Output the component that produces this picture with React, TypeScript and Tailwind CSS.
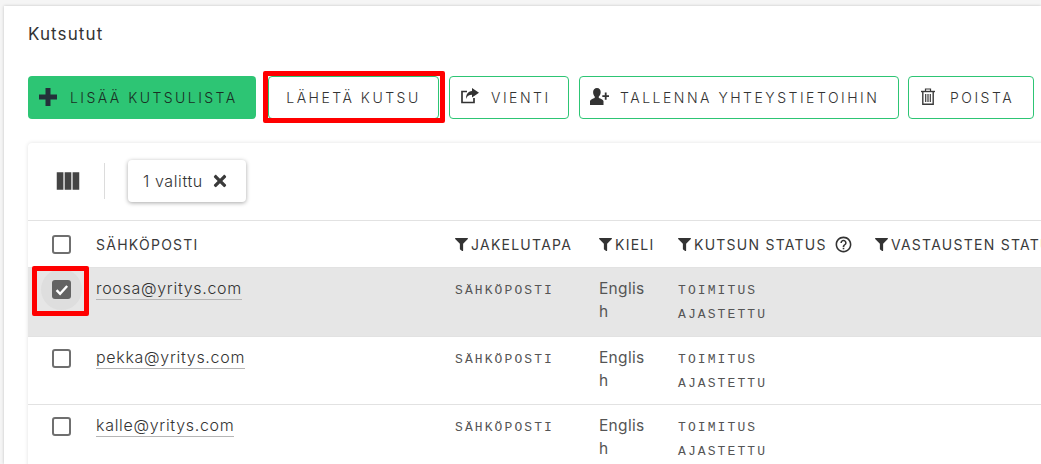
import { FaFilter, FaTimes } from "react-icons/fa";
import { MdViewColumn, MdHelpOutline } from "react-icons/md";

const sans = "font-['Inter','Noto_Sans',sans-serif]";
const rows = ["roosa@yritys.com", "pekka@yritys.com", "kalle@yritys.com"];

function Box() {
  return <span className="block w-[19px] h-[19px] rounded-[3px] border-2 border-[#6f6f6f] bg-white" />;
}

function Head({ label, cls }: { label: string; cls: string }) {
  return (
    <div className={`flex items-center shrink-0 ${cls}`}>
      <FaFilter className="w-[13px] h-[13px] text-[#333] shrink-0 mr-[3px]" />
      <span className="whitespace-nowrap">{label}</span>
    </div>
  );
}

function Outline({ icon, label, cls }: { icon?: React.ReactNode; label: string; cls: string }) {
  return (
    <button className={`flex items-center h-[43px] rounded-[4px] border border-[#2dc574] bg-white text-[14px] font-light tracking-[2.5px] text-[#333] whitespace-nowrap shrink-0 ${cls}`}>
      {icon}
      <span>{label}</span>
    </button>
  );
}

function PlusIcon() {
  return (
    <svg viewBox="0 0 18 18" className="w-[18px] h-[18px] mr-[13px] mb-[2px]" fill="#24303a">
      <path d="M6.5 0h5v6.5H18v5h-6.5V18h-5v-6.5H0v-5h6.5z" />
    </svg>
  );
}

function ShareIcon() {
  return (
    <svg viewBox="0 0 18 16" className="w-[18px] h-[16px] mr-[12px] mb-[3px]">
      <path d="M6 3.5H1v11h12V10" fill="none" stroke="#333" strokeWidth="1.7" />
      <path d="M11 0l7 4.8-7 4.8V6.8C8 6.8 6 8 5 11 4.8 6.5 7 3.3 11 3z" fill="#333" />
    </svg>
  );
}

function UserAddIcon() {
  return (
    <svg viewBox="0 0 19 17" className="w-[19px] h-[17px] mr-[11px] mb-[3px]" fill="#333">
      <path d="M7 0c2.4 0 3.7 1.7 3.7 4 0 2-.8 3.6-1.9 4.5v1.6c2 .8 4.2 1.6 4.7 3V17H0v-3.9c.5-1.4 2.7-2.2 4.7-3V8.500C3.900 7.600 3.100 6 3.100 4 3.100 1.700 4.600 0 7 0z" />
      <path d="M14.800 4.500h1.800v2.700h2.400v1.800h-2.400v2.700h-1.800V9h-2.500V7.200h2.500z" />
    </svg>
  );
}

function TrashIcon() {
  return (
    <svg viewBox="0 0 14 17" className="w-[14px] h-[17px] mr-[15px] mb-[3px]" fill="none" stroke="#3a3a3a">
      <path d="M0 3.500h14" strokeWidth="1.400" />
      <path d="M4.500 3V1h5v2" strokeWidth="1.200" />
      <path d="M1.800 3.500v12.700h10.400V3.500" strokeWidth="1.400" />
      <path d="M4.700 6v8M7 6v8M9.300 6v8" strokeWidth="1.200" />
    </svg>
  );
}

export default function App() {
  return (
    <div className={`w-[1041px] h-[464px] overflow-hidden bg-[#f5f5f5] pl-[4px] pt-[6px] ${sans}`}>
      <div className="w-[1037px] h-[458px] overflow-hidden bg-white pl-[24px] shadow-[0_0_3px_rgba(0,0,0,0.2)]">
        <h2 className="pt-[17px] h-[70px] text-[17px] leading-[22px] text-[#333] font-normal tracking-[1.1px]">Kutsutut</h2>
        <div className="relative flex gap-[10px] h-[43px] w-[1100px]">
          <button className="flex items-center w-[228px] h-[43px] rounded-[4px] bg-[#2dc574] pl-[11px] text-[14px] font-light tracking-[2.45px] text-[#1a2e24] shrink-0 whitespace-nowrap">
            <PlusIcon />
            LISÄÄ KUTSULISTA
          </button>
          <div className="relative shrink-0 ml-[2px]">
            <Outline label="LÄHETÄ KUTSU" cls="w-[171px] justify-center" />
            <div className="absolute left-[-5px] top-[-5px] w-[182px] h-[52px] border-[5px] border-[#ff0000] rounded-[2px] pointer-events-none" />
          </div>
          <Outline label="VIENTI" cls="w-[120px] pl-[11px]" icon={<ShareIcon />} />
          <Outline label="TALLENNA YHTEYSTIETOIHIN" cls="w-[320px] pl-[10px]" icon={<UserAddIcon />} />
          <Outline label="POISTA" cls="w-[126px] pl-[12px] ml-[-1px]" icon={<TrashIcon />} />
        </div>

        <div className="mt-[24px] w-[1100px] bg-white rounded-[4px] shadow-[0_0_4px_rgba(0,0,0,0.12)]">
          <div className="flex items-center h-[77px] pb-[1px]">
            <MdViewColumn className="w-[30px] h-[30px] text-[#444] ml-[25px]" />
            <span className="w-px h-[36px] bg-[#dcdcdc] ml-[21px]" />
            <div className="flex items-center h-[42px] w-[118px] ml-[23px] rounded-[4px] bg-white shadow-[0_1px_4px_rgba(0,0,0,0.35)] pl-[15px] text-[16px] font-light tracking-[0.6px] text-[#333]">
              1 valittu
              <FaTimes className="w-[18px] h-[18px] ml-[8px] text-[#3a3a3a]" />
            </div>
          </div>

          <div className="flex items-center h-[48px] pt-[1px] border-t border-b border-[#e2e2e2] text-[14px] tracking-[1.25px] text-[#3a3a3a]">
            <div className="w-[68px] pl-[24px] shrink-0"><Box /></div>
            <div className="w-[359px] shrink-0">SÄHKÖPOSTI</div>
            <Head label="JAKELUTAPA" cls="w-[144px]" />
            <Head label="KIELI" cls="w-[79px]" />
            <div className="w-[197px] shrink-0 flex items-center">
              <Head label="KUTSUN STATUS" cls="" />
              <MdHelpOutline className="w-[19px] h-[19px] ml-[7px] text-[#333]" />
            </div>
            <Head label="VASTAUSTEN STATUS" cls="w-[200px]" />
          </div>

          {rows.map((email, i) => (
            <div
              key={email}
              className={`flex items-start border-b border-[#e2e2e2] ${i === 0 ? "h-[69px] bg-[#e6e6e6]" : "h-[68px] bg-white"}`}
            >
              <div className="relative w-[68px] pl-[24px] pt-[12px] shrink-0">
                {i === 0 ? (
                  <>
                    <span className="absolute left-[13px] top-[1px] w-[41px] h-[41px] rounded-full bg-[#dedede]" />
                    <span className="relative flex items-center justify-center w-[19px] h-[19px] rounded-[3px] bg-[#636363]">
                      <svg viewBox="0 0 24 24" className="w-[17px] h-[17px]" fill="none" stroke="#fff" strokeWidth="3.4">
                        <path d="M5 13l5 5 10-11" />
                      </svg>
                    </span>
                    <span className="absolute left-[4px] top-[-2px] w-[57px] h-[50px] border-[5px] border-[#ff0000] rounded-[2px]" />
                  </>
                ) : (
                  <Box />
                )}
              </div>
              <div className="w-[359px] shrink-0 pt-[8px]">
                <span className="inline-block text-[16px] font-light leading-[22px] tracking-[0.7px] text-[#333] border-b border-[#b5b5b5]">{email}</span>
              </div>
              <div className="w-[144px] shrink-0 pt-[13px] font-['Liberation_Mono',monospace] text-[13px] leading-[20px] tracking-[2.1px] text-[#555]">SÄHKÖPOSTI</div>
              <div className="w-[79px] shrink-0 pt-[9px] pr-[29px] text-[15.5px] leading-[23px] tracking-[0.3px] text-[#555] break-all">English</div>
              <div className="w-[197px] shrink-0 pt-[13px] font-['Liberation_Mono',monospace] text-[13px] tracking-[2.1px] text-[#555]">
                <div className="leading-[20px]">TOIMITUS</div>
                <div className="leading-[28px]">AJASTETTU</div>
              </div>
            </div>
          ))}
        </div>
      </div>
    </div>
  );
}
